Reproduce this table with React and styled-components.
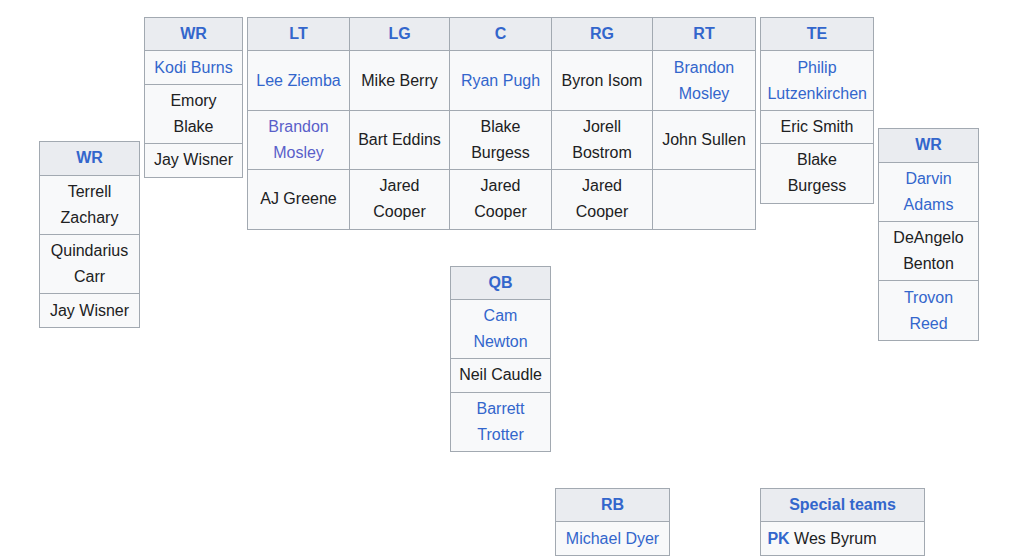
import React from "react";
import styled, { createGlobalStyle } from "styled-components";

const Global = createGlobalStyle`
  html, body { margin: 0; padding: 0; background: #ffffff; }
  body {
    font-family: "Liberation Sans", Arial, sans-serif;
    font-size: 16px;
    color: #202122;
  }
`;

const Formation = styled.div`
  display: grid;
  grid-template-columns: 101px 99px 509px 114px 101px;
  column-gap: 4px;
  row-gap: 36px;
  align-items: start;
  padding: 17px 0 0 39px;
`;

const Depth = styled.table`
  border-collapse: separate;
  border-spacing: 0;
  table-layout: fixed;
  width: ${(p) => p.$w}px;
  border-top: 1px solid #a2a9b1;
  border-left: 1px solid #a2a9b1;
  background: #f8f9fa;
  color: #202122;
  grid-column: ${(p) => p.$col};
  grid-row: ${(p) => p.$row};
  align-self: ${(p) => p.$align || "start"};
  justify-self: start;
  margin-left: ${(p) => p.$shift || 0}px;
  font-size: 16px;
  line-height: 26px;
`;

const Head = styled.th`
  box-sizing: border-box;
  width: ${(p) => (p.$w ? `${p.$w}px` : "auto")};
  background: #eaecf0;
  border-right: 1px solid #a2a9b1;
  border-bottom: 1px solid #a2a9b1;
  padding: 3.2px 6.4px;
  font-weight: bold;
  text-align: center;
  vertical-align: middle;
`;

const Cell = styled.td`
  box-sizing: border-box;
  border-right: 1px solid #a2a9b1;
  border-bottom: 1px solid #a2a9b1;
  padding: 3.2px 6.4px;
  text-align: ${(p) => p.$align || "center"};
  vertical-align: middle;
`;

const Link = styled.a`
  color: ${(p) => (p.$visited ? "#5a5fc9" : "#3366cc")};
  text-decoration: none;
  font-weight: ${(p) => (p.$bold ? "bold" : "inherit")};
`;

const Name = ({ p }) => {
  if (!p) return null;
  if (p.link) return <Link href="#" $visited={p.visited}>{p.n}</Link>;
  return <>{p.n}</>;
};

const L = (n, visited) => ({ n, link: true, visited });
const T = (n) => ({ n, link: false });

const PositionTable = ({ title, players, w, col, row, align, shift }) => (
  <Depth $w={w} $col={col} $row={row} $align={align} $shift={shift}>
    <thead>
      <tr>
        <Head>
          <Link href="#">{title}</Link>
        </Head>
      </tr>
    </thead>
    <tbody>
      {players.map((p, i) => (
        <tr key={i}>
          <Cell>
            <Name p={p} />
          </Cell>
        </tr>
      ))}
    </tbody>
  </Depth>
);

const line = [
  { pos: "LT", w: 102, players: [L("Lee Ziemba"), L("Brandon Mosley", true), T("AJ Greene")] },
  { pos: "LG", w: 100, players: [T("Mike Berry"), T("Bart Eddins"), T("Jared Cooper")] },
  { pos: "C", w: 102, players: [L("Ryan Pugh"), T("Blake Burgess"), T("Jared Cooper")] },
  { pos: "RG", w: 101, players: [T("Byron Isom"), T("Jorell Bostrom"), T("Jared Cooper")] },
  { pos: "RT", w: 103, players: [L("Brandon Mosley"), T("John Sullen"), null] },
];

const OffensiveLine = () => (
  <Depth $w={509} $col="3" $row="1">
    <thead>
      <tr>
        {line.map((c) => (
          <Head key={c.pos} $w={c.w}>
            <Link href="#">{c.pos}</Link>
          </Head>
        ))}
      </tr>
    </thead>
    <tbody>
      {[0, 1, 2].map((r) => (
        <tr key={r}>
          {line.map((c) => (
            <Cell key={c.pos}>
              <Name p={c.players[r]} />
            </Cell>
          ))}
        </tr>
      ))}
    </tbody>
  </Depth>
);

const SpecialTeams = () => (
  <Depth $w={165} $col="4 / span 2" $row="3">
    <thead>
      <tr>
        <Head>
          <Link href="#">Special teams</Link>
        </Head>
      </tr>
    </thead>
    <tbody>
      <tr>
        <Cell $align="left">
          <Link href="#" $bold>PK</Link> Wes Byrum
        </Cell>
      </tr>
    </tbody>
  </Depth>
);

export default function App() {
  return (
    <>
      <Global />
      <Formation>
        <PositionTable
          title="WR"
          w={101}
          col="1"
          row="1 / span 2"
          align="center"
          players={[T("Terrell Zachary"), T("Quindarius Carr"), T("Jay Wisner")]}
        />
        <PositionTable
          title="WR"
          w={99}
          col="2"
          row="1"
          players={[L("Kodi Burns"), T("Emory Blake"), T("Jay Wisner")]}
        />
        <OffensiveLine />
        <PositionTable
          title="TE"
          w={114}
          col="4"
          row="1"
          players={[L("Philip Lutzenkirchen"), T("Eric Smith"), T("Blake Burgess")]}
        />
        <PositionTable
          title="WR"
          w={101}
          col="5"
          row="1 / span 2"
          align="center"
          players={[L("Darvin Adams"), T("DeAngelo Benton"), L("Trovon Reed")]}
        />
        <PositionTable
          title="QB"
          w={101}
          col="3"
          row="2"
          shift={203}
          players={[L("Cam Newton"), T("Neil Caudle"), L("Barrett Trotter")]}
        />
        <PositionTable
          title="RB"
          w={115}
          col="3"
          row="3"
          shift={308}
          players={[L("Michael Dyer")]}
        />
        <SpecialTeams />
      </Formation>
    </>
  );
}
